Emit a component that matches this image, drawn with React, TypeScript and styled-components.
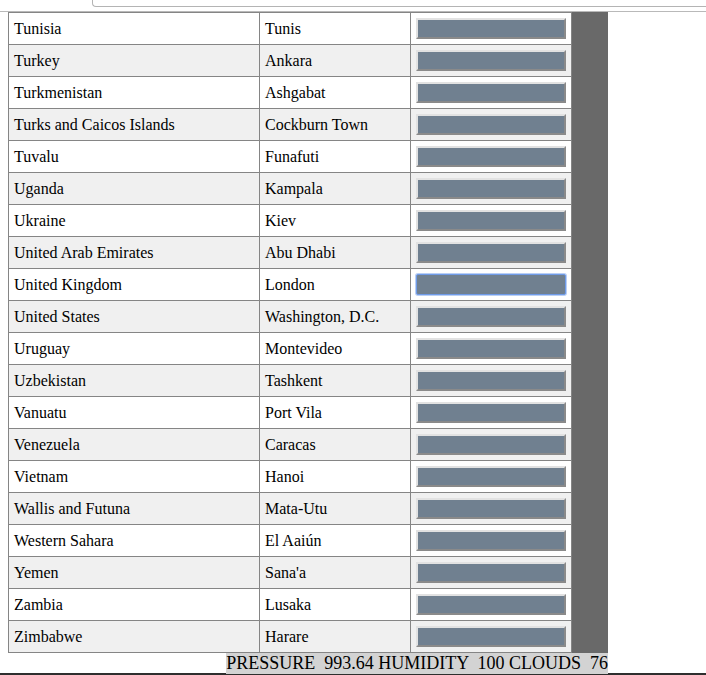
import styled, { createGlobalStyle } from "styled-components";

type Country = {
  name: string;
  capital: string;
};

const countries: Country[] = [
  { name: "Tunisia", capital: "Tunis" },
  { name: "Turkey", capital: "Ankara" },
  { name: "Turkmenistan", capital: "Ashgabat" },
  { name: "Turks and Caicos Islands", capital: "Cockburn Town" },
  { name: "Tuvalu", capital: "Funafuti" },
  { name: "Uganda", capital: "Kampala" },
  { name: "Ukraine", capital: "Kiev" },
  { name: "United Arab Emirates", capital: "Abu Dhabi" },
  { name: "United Kingdom", capital: "London" },
  { name: "United States", capital: "Washington, D.C." },
  { name: "Uruguay", capital: "Montevideo" },
  { name: "Uzbekistan", capital: "Tashkent" },
  { name: "Vanuatu", capital: "Port Vila" },
  { name: "Venezuela", capital: "Caracas" },
  { name: "Vietnam", capital: "Hanoi" },
  { name: "Wallis and Futuna", capital: "Mata-Utu" },
  { name: "Western Sahara", capital: "El Aaiún" },
  { name: "Yemen", capital: "Sana'a" },
  { name: "Zambia", capital: "Lusaka" },
  { name: "Zimbabwe", capital: "Harare" },
];

const GlobalStyle = createGlobalStyle`
  body {
    margin: 0;
    font-family: "Liberation Serif", "Times New Roman", serif;
    color: #000;
    background: #fff;
  }
`;

const TopStrip = styled.div`
  display: flex;
  flex-direction: column;
`;

const SearchBox = styled.div`
  height: 7px;
  margin-left: 92px;
  margin-bottom: 4px;
  box-sizing: border-box;
  border: 1px solid #b4b4b4;
  border-top: none;
  border-right: none;
  border-bottom-left-radius: 4px;
`;

const Rule = styled.div`
  height: 1px;
  background: #b9b9b9;
`;

const Main = styled.div`
  margin-left: 8px;
  width: 600px;
`;

const Panel = styled.div`
  background: #696969;
  display: flex;
`;

const Table = styled.table`
  width: 563px;
  table-layout: fixed;
  border-collapse: collapse;
  background: #fff;
  font-size: 16px;
`;

const Row = styled.tr<{ $shaded: boolean }>`
  background: ${(p) => (p.$shaded ? "#f0f0f0" : "#fff")};
`;

const Cell = styled.td`
  height: 32px;
  box-sizing: border-box;
  padding: 0 5px;
  border: 1px solid #858585;
  vertical-align: middle;
  white-space: nowrap;
`;

const Bar = styled.input<{ $focused?: boolean }>`
  display: block;
  width: 150px;
  height: 21px;
  box-sizing: border-box;
  margin: 0;
  padding: 0;
  background: #708090;
  border: 2px solid;
  border-color: #e2e2e2 #8a8a8a #8a8a8a #e2e2e2;
  outline: none;
  ${(p) =>
    p.$focused &&
    `
    border: 1px solid #6f9be8;
    border-radius: 2px;
    box-shadow: 0 0 0 1px #b9cff5;
  `}
`;

const Footer = styled.div`
  text-align: right;
  font-size: 18px;
  line-height: 20px;
  white-space: pre;
`;

const Readout = styled.span`
  background: #d3d3d3;
  padding-bottom: 1px;
`;

const BottomEdge = styled.div`
  height: 3px;
  background: #2e2e2e;
`;

export default function App() {
  return (
    <>
      <GlobalStyle />
      <TopStrip>
        <SearchBox />
        <Rule />
      </TopStrip>
      <Main>
        <Panel>
          <Table>
            <colgroup>
              <col style={{ width: 251 }} />
              <col style={{ width: 151 }} />
              <col style={{ width: 161 }} />
            </colgroup>
            <tbody>
              {countries.map((c, i) => (
                <Row key={c.name} $shaded={i % 2 === 1}>
                  <Cell>{c.name}</Cell>
                  <Cell>{c.capital}</Cell>
                  <Cell>
                    <Bar
                      type="text"
                      readOnly
                      $focused={c.name === "United Kingdom"}
                    />
                  </Cell>
                </Row>
              ))}
            </tbody>
          </Table>
        </Panel>
        <Footer>
          <Readout>{"PRESSURE  993.64 HUMIDITY  100 CLOUDS  76"}</Readout>
        </Footer>
      </Main>
      <BottomEdge />
    </>
  );
}
